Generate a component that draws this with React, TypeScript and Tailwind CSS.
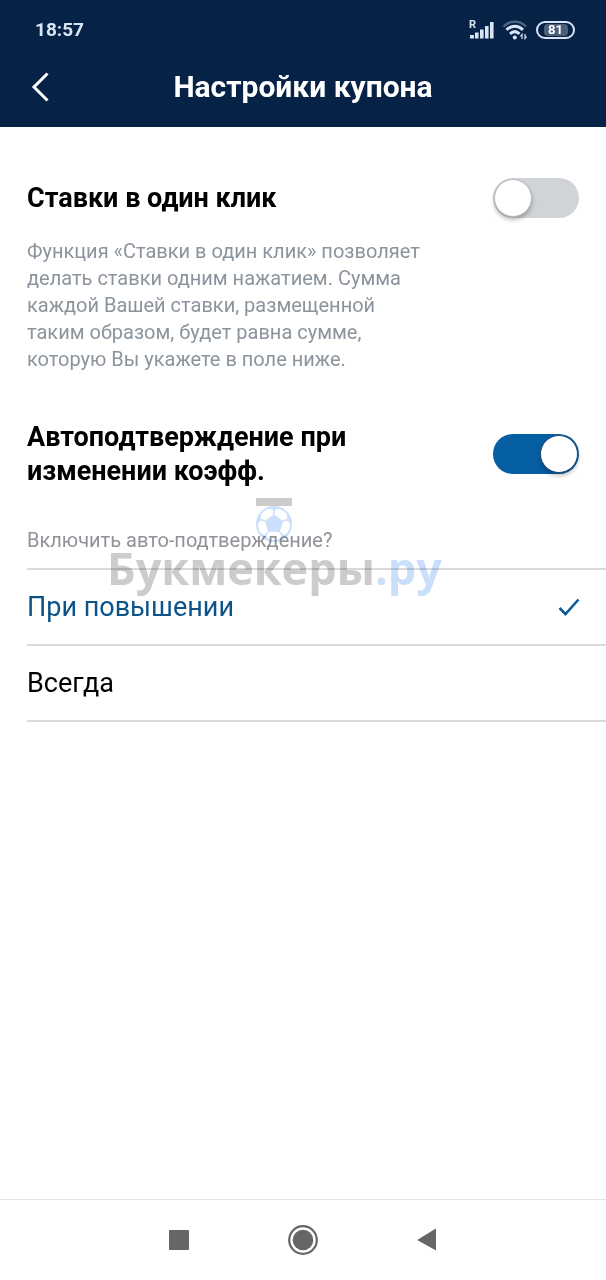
import React, { useState } from 'react';

type ToggleProps = {
    id: string;
    checked: boolean;
    onChange: (checked: boolean) => void;
};

const Toggle = ({ id, checked, onChange }: ToggleProps) => (
    <span className="relative flex h-10 w-[86px] shrink-0">
        <input
            id={id}
            type="checkbox"
            role="switch"
            checked={checked}
            onChange={(e) => onChange(e.target.checked)}
            className="peer h-10 w-full cursor-pointer appearance-none rounded-full bg-[#d0d4d9] checked:bg-[#065fa3]"
        />
        <span className="pointer-events-none absolute top-px left-px size-[38px] rounded-full border border-[#b5babf] bg-white shadow-[0_3px_4px_rgba(0,0,0,0.25)] peer-checked:right-px peer-checked:left-auto peer-checked:border-[#1d4a78]" />
    </span>
);

const StatusBar = () => (
    <div className="flex h-[60px] items-center justify-between pr-[31px] pl-[35px] text-[#d9e4f4]">
        <span className="text-[19px] font-bold">18:57</span>
        <div className="flex items-center gap-2">
            {/* Signal strength with roaming mark */}
            <svg width="25" height="26" viewBox="0 -2 25 26" fill="currentColor" className="overflow-visible" aria-hidden="true">
                <text x="0" y="9" fontSize="11" fontWeight="700">R</text>
                <path d="M1 16h4v3.500H1zM6 13.500h3.600v6H6zM11 10.500h3.600v9H11zM16 7h3.600v12.500H16zM21 3h3.600v16.500H21z" />
            </svg>
            {/* Wi-Fi */}
            <svg width="26" height="22" viewBox="0 0 26 22" fill="none" stroke="currentColor" aria-hidden="true">
                <path d="M1.500 7.500C8 1 17.500 1 24 7.500" strokeWidth="2.400" opacity="0.35" />
                <path d="M4.500 10.800C9.500 6 16 6 21 10.800" strokeWidth="3" />
                <path d="M8 14.800c3-2.700 6.500-2.700 9.500 0" strokeWidth="3" />
                <circle cx="12.800" cy="18.500" r="2" fill="currentColor" stroke="none" />
                <path d="M20 20v-4.500l-1.500 1.800M23 15v4.500l1.500-1.800" strokeWidth="1.200" />
            </svg>
            <span className="flex h-[18px] w-[39px] items-center justify-center rounded-full border-2 border-current">
                <span className="flex h-3 w-6 items-center justify-center rounded-sm bg-[#4a5f7a] text-[13px] leading-3 font-bold text-white">81</span>
            </span>
        </div>
    </div>
);

const Watermark = () => (
    <div className="pointer-events-none absolute -top-5 left-20 flex flex-col items-center text-[#cdcbcb] mix-blend-multiply">
        <span className="h-2 w-9 bg-current" />
        <svg width="36" height="36" viewBox="-18 -18 36 36" aria-hidden="true">
            <circle r="18" fill="#cbdffa" />
            {[0, 72, 144, 216, 288].map((angle) => (
                <path key={angle} transform={`rotate(${angle})`} d="M-4.800 7.800H4.800L7.600 12 4.800 15.500Q0 17 -4.800 15.500L-7.600 12Z" fill="#fff" />
            ))}
        </svg>
        <span className="font-['Open_Sans',sans-serif] text-[45px] leading-[52px] font-bold">
            Букмекеры<span className="text-[#cbdffa]">.ру</span>
        </span>
    </div>
);

const options = [
    { value: 'increase', label: 'При повышении' },
    { value: 'always', label: 'Всегда' }
];

const App = () => {
    const [oneClick, setOneClick] = useState(false);
    const [autoConfirm, setAutoConfirm] = useState(true);
    const [mode, setMode] = useState('increase');

    return (
        <div className="flex min-h-screen flex-col bg-white font-[Roboto,sans-serif] text-black">
            <header className="bg-[#062247]">
                <StatusBar />
                <div className="grid grid-cols-[54px_1fr_54px] items-center pb-[13px]">
                    <button aria-label="Назад" className="flex h-[54px] items-center justify-end pr-1 text-white">
                        <svg width="20" height="32" viewBox="0 0 20 32" fill="none" stroke="currentColor" strokeWidth="3" aria-hidden="true">
                            <path d="M17.500 2.500L4 16l13.500 13.500" />
                        </svg>
                    </button>
                    <h1 className="text-center text-[30px] leading-[42px] font-bold text-white">Настройки купона</h1>
                </div>
            </header>

            <main className="flex-1 pt-[51px] pl-[27px]">
                <div className="flex items-center justify-between pr-[27px]">
                    <label htmlFor="one-click" className="text-[27px] leading-[34px] font-bold">Ставки в один клик</label>
                    <Toggle id="one-click" checked={oneClick} onChange={setOneClick} />
                </div>
                <p className="mt-5 mr-[27px] max-w-[410px] text-[20px] leading-[27px] text-[#8b949d]">
                    Функция «Ставки в один клик» позволяет делать ставки одним нажатием. Сумма каждой Вашей ставки, размещенной таким образом, будет равна сумме, которую Вы укажете в поле ниже.
                </p>

                <div className="mt-[47px] flex items-center justify-between pr-[27px]">
                    <label htmlFor="auto-confirm" className="max-w-[350px] text-[27px] leading-[34px] font-bold">Автоподтверждение при изменении коэфф.</label>
                    <Toggle id="auto-confirm" checked={autoConfirm} onChange={setAutoConfirm} />
                </div>

                <div className="relative mt-[30px]" role="radiogroup" aria-labelledby="mode-title">
                    <p id="mode-title" className="pt-[9px] pb-[14px] text-[20px] leading-[27px] text-[#8f9297]">Включить авто-подтверждение?</p>
                    <div className="border-t-2 border-[#dadadc]">
                        {options.map(({ value, label }) => (
                            <label
                                key={value}
                                className="flex h-[76px] cursor-pointer items-center justify-between border-b-2 border-[#dadadc] pr-[26px] text-[27px] has-checked:text-[#0b5389]"
                            >
                                <input
                                    type="radio"
                                    name="mode"
                                    value={value}
                                    checked={mode === value}
                                    onChange={() => setMode(value)}
                                    className="sr-only"
                                />
                                {label}
                                {mode === value && (
                                    <svg width="22" height="18" viewBox="0 0 22 18" fill="none" stroke="#0b5c9c" strokeWidth="2.600" aria-hidden="true">
                                        <path d="M1.500 10l6 6L20.500 1.500" />
                                    </svg>
                                )}
                            </label>
                        ))}
                    </div>
                    <Watermark />
                </div>
            </main>

            <nav className="flex h-[81px] items-center justify-center border-t border-[#e4e4e4] text-[#666]">
                <button aria-label="Недавние" className="flex w-[124px] justify-center">
                    <svg width="20" height="20" viewBox="0 0 20 20" fill="currentColor" aria-hidden="true"><rect width="20" height="20" rx="1" /></svg>
                </button>
                <button aria-label="Домой" className="flex w-[124px] justify-center">
                    <svg width="30" height="30" viewBox="0 0 30 30" fill="currentColor" aria-hidden="true">
                        <circle cx="15" cy="15" r="13.800" fill="none" stroke="currentColor" strokeWidth="2.200" />
                        <circle cx="15" cy="15" r="10.300" />
                    </svg>
                </button>
                <button aria-label="Назад" className="flex w-[124px] justify-center">
                    <svg width="20" height="24" viewBox="0 0 20 24" fill="currentColor" aria-hidden="true"><path d="M19 1.500v21L1 12.500q-1-.5 0-1L18 1q1-.5 1 .5z" /></svg>
                </button>
            </nav>
        </div>
    );
};

export default App;
